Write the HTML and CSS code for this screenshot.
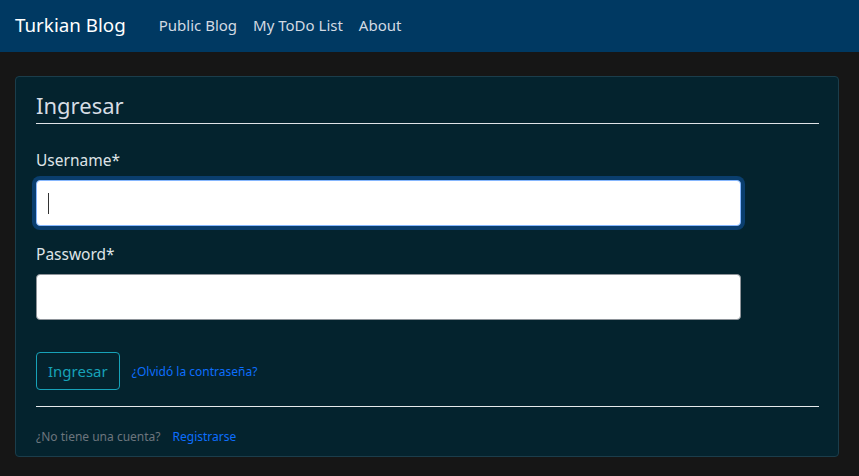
FILE: index.html
```html
<!DOCTYPE html>
<html lang="es">
<head>
<meta charset="utf-8">
<title>Turkian Blog</title>
<link rel="stylesheet" href="styles.css">
</head>
<body>
<nav class="navbar">
  <a class="brand" href="#">Turkian Blog</a>
  <ul class="nav">
    <li><a href="#">Public Blog</a></li>
    <li><a href="#">My ToDo List</a></li>
    <li><a href="#">About</a></li>
  </ul>
</nav>
<main class="container">
  <section class="card">
    <h4 class="card-title">Ingresar</h4>
    <form class="form">
      <div class="field">
        <label class="label" for="u">Username*</label>
        <div class="input focus"><span class="caret"></span></div>
      </div>
      <div class="field">
        <label class="label" for="p">Password*</label>
        <div class="input"></div>
      </div>
      <div class="actions">
        <button type="button" class="btn">Ingresar</button>
        <a class="link small" href="#">¿Olvidó la contraseña?</a>
      </div>
    </form>
    <hr class="rule">
    <div class="footer">
      <span class="muted">¿No tiene una cuenta?</span>
      <a class="link" href="#">Registrarse</a>
    </div>
  </section>
</main>
</body>
</html>
```
FILE: styles.css
```css
* { box-sizing: border-box; }
html, body { margin: 0; padding: 0; }
body {
  background: #161616;
  font-family: "Noto Sans", "Open Sans", sans-serif;
  color: #dee2e6;
  font-size: 16px;
}
a { text-decoration: none; }
.navbar {
  height: 52px;
  background: #003962;
  display: flex;
  align-items: center;
  padding: 0 15px 2px;
}
.brand {
  color: #ffffff;
  font-size: 18.8px;
  margin-right: 33px;
}
.nav {
  list-style: none;
  margin: 0;
  padding: 0;
  display: flex;
  gap: 16px;
}
.nav a {
  color: #d3dae2;
  font-size: 15px;
}
.container {
  padding: 24px 20px 0 15px;
}
.card {
  background: #04232e;
  border: 1px solid #1b3d4b;
  border-radius: 4px;
  padding: 14px 19px 12px 20px;
  height: 381px;
}
.card-title {
  margin: 0;
  font-size: 22px;
  font-weight: 400;
  line-height: 29px;
  color: #d6dde4;
  border-bottom: 1px solid #dfe3e7;
  padding-bottom: 3px;
}
.form { margin-top: 24px; }
.field { margin-bottom: 16px; }
.label {
  display: block;
  line-height: 24px;
  color: #dfe3e7;
  font-size: 15.5px;
  margin-bottom: 8px;
}
.input {
  width: 705px;
  height: 46px;
  background: #fff;
  border: 1px solid #8e9399;
  border-radius: 4px;
  position: relative;
}
.input.focus {
  border-color: #86b7fe;
  box-shadow: 0 0 0 4px #0a3e6e;
}
.caret {
  position: absolute;
  left: 11px;
  top: 12px;
  width: 1px;
  height: 21px;
  background: #333;
}
.actions {
  display: flex;
  align-items: center;
  gap: 12px;
  margin-top: 32px;
}
.btn {
  font-family: inherit;
  font-size: 15px;
  height: 38px;
  padding: 0 11px;
  background: transparent;
  border: 1px solid #17a2b8;
  color: #17a2b8;
  border-radius: 4px;
}
.link { color: #0d6efd; font-size: 12px; }
.rule {
  border: 0;
  border-top: 1px solid #e6e9ec;
  margin: 16px 0 0;
}
.footer {
  margin-top: 21px;
  display: flex;
  gap: 12px;
  font-size: 12px;
}
.muted { color: #6c757d; }
```
